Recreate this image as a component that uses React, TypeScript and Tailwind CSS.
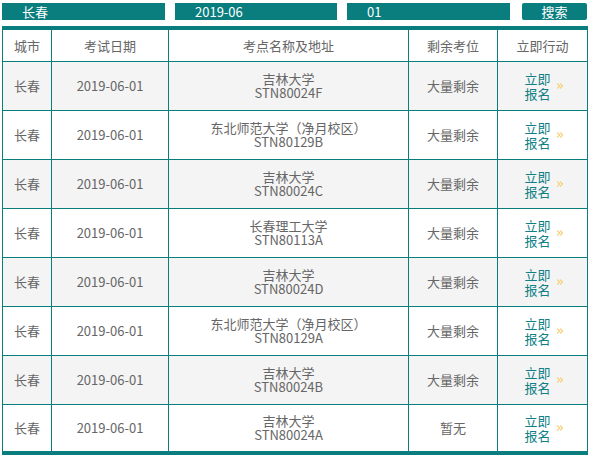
import { ChevronsRight } from 'lucide-react';

type Row = { date: string; name: string; code: string; left: string };

const rows: Row[] = [
  { date: '2019-06-01', name: '吉林大学', code: 'STN80024F', left: '大量剩余' },
  { date: '2019-06-01', name: '东北师范大学（净月校区）', code: 'STN80129B', left: '大量剩余' },
  { date: '2019-06-01', name: '吉林大学', code: 'STN80024C', left: '大量剩余' },
  { date: '2019-06-01', name: '长春理工大学', code: 'STN80113A', left: '大量剩余' },
  { date: '2019-06-01', name: '吉林大学', code: 'STN80024D', left: '大量剩余' },
  { date: '2019-06-01', name: '东北师范大学（净月校区）', code: 'STN80129A', left: '大量剩余' },
  { date: '2019-06-01', name: '吉林大学', code: 'STN80024B', left: '大量剩余' },
  { date: '2019-06-01', name: '吉林大学', code: 'STN80024A', left: '暂无' },
];

export default function App() {
  return (
    <div
      className="w-[589px] h-[456px] bg-white overflow-hidden text-[13px] text-[#666]"
      style={{ fontFamily: '"Microsoft YaHei", "Noto Sans CJK SC", sans-serif' }}
    >
      <div className="flex pt-[3px] pl-[2px]">
        <div className="w-[163px] h-[17px] bg-[#0a7d7e] text-white leading-[17px] pl-[20px]">长春</div>
        <div className="w-[162px] h-[17px] bg-[#0a7d7e] text-white leading-[17px] pl-[20px] ml-[10px]">2019-06</div>
        <div className="w-[163px] h-[17px] bg-[#0a7d7e] text-white leading-[17px] pl-[20px] ml-[10px]">01</div>
        <button className="w-[65px] h-[17px] bg-[#0a7d7e] text-white leading-[17px] rounded-[2px] ml-[12px]">搜索</button>
      </div>

      <table className="ml-[2px] mt-[6px] w-[585px] table-fixed border-collapse border-t-4 border-b-4 border-[#0a7d7e] text-center">
        <colgroup>
          <col className="w-[49px]" />
          <col className="w-[117px]" />
          <col className="w-[240px]" />
          <col className="w-[89px]" />
          <col className="w-[90px]" />
        </colgroup>
        <thead>
          <tr className="h-[33px]">
            {['城市', '考试日期', '考点名称及地址', '剩余考位', '立即行动'].map((h) => (
              <th key={h} className="border border-[#0a7d7e] font-normal">
                {h}
              </th>
            ))}
          </tr>
        </thead>
        <tbody>
          {rows.map((r, i) => (
            <tr key={i} className={`h-[49px] ${i % 2 === 0 ? 'bg-[#f4f4f4]' : 'bg-white'}`}>
              <td className="border border-[#0a7d7e]">长春</td>
              <td className="border border-[#0a7d7e]">{r.date}</td>
              <td className="border border-[#0a7d7e] leading-[14px]">
                <div>{r.name}</div>
                <div>{r.code}</div>
              </td>
              <td className="border border-[#0a7d7e]">{r.left}</td>
              <td className="border border-[#0a7d7e]">
                <div className="flex items-center justify-center pl-[4px]">
                  <span className="w-[27px] leading-[15px] text-[#117f86] text-left">立即 报名</span>
                  <ChevronsRight className="w-[10px] h-[10px] text-[#f5cf72] ml-[3px] mt-[1px]" strokeWidth={3} />
                </div>
              </td>
            </tr>
          ))}
        </tbody>
      </table>
    </div>
  );
}
